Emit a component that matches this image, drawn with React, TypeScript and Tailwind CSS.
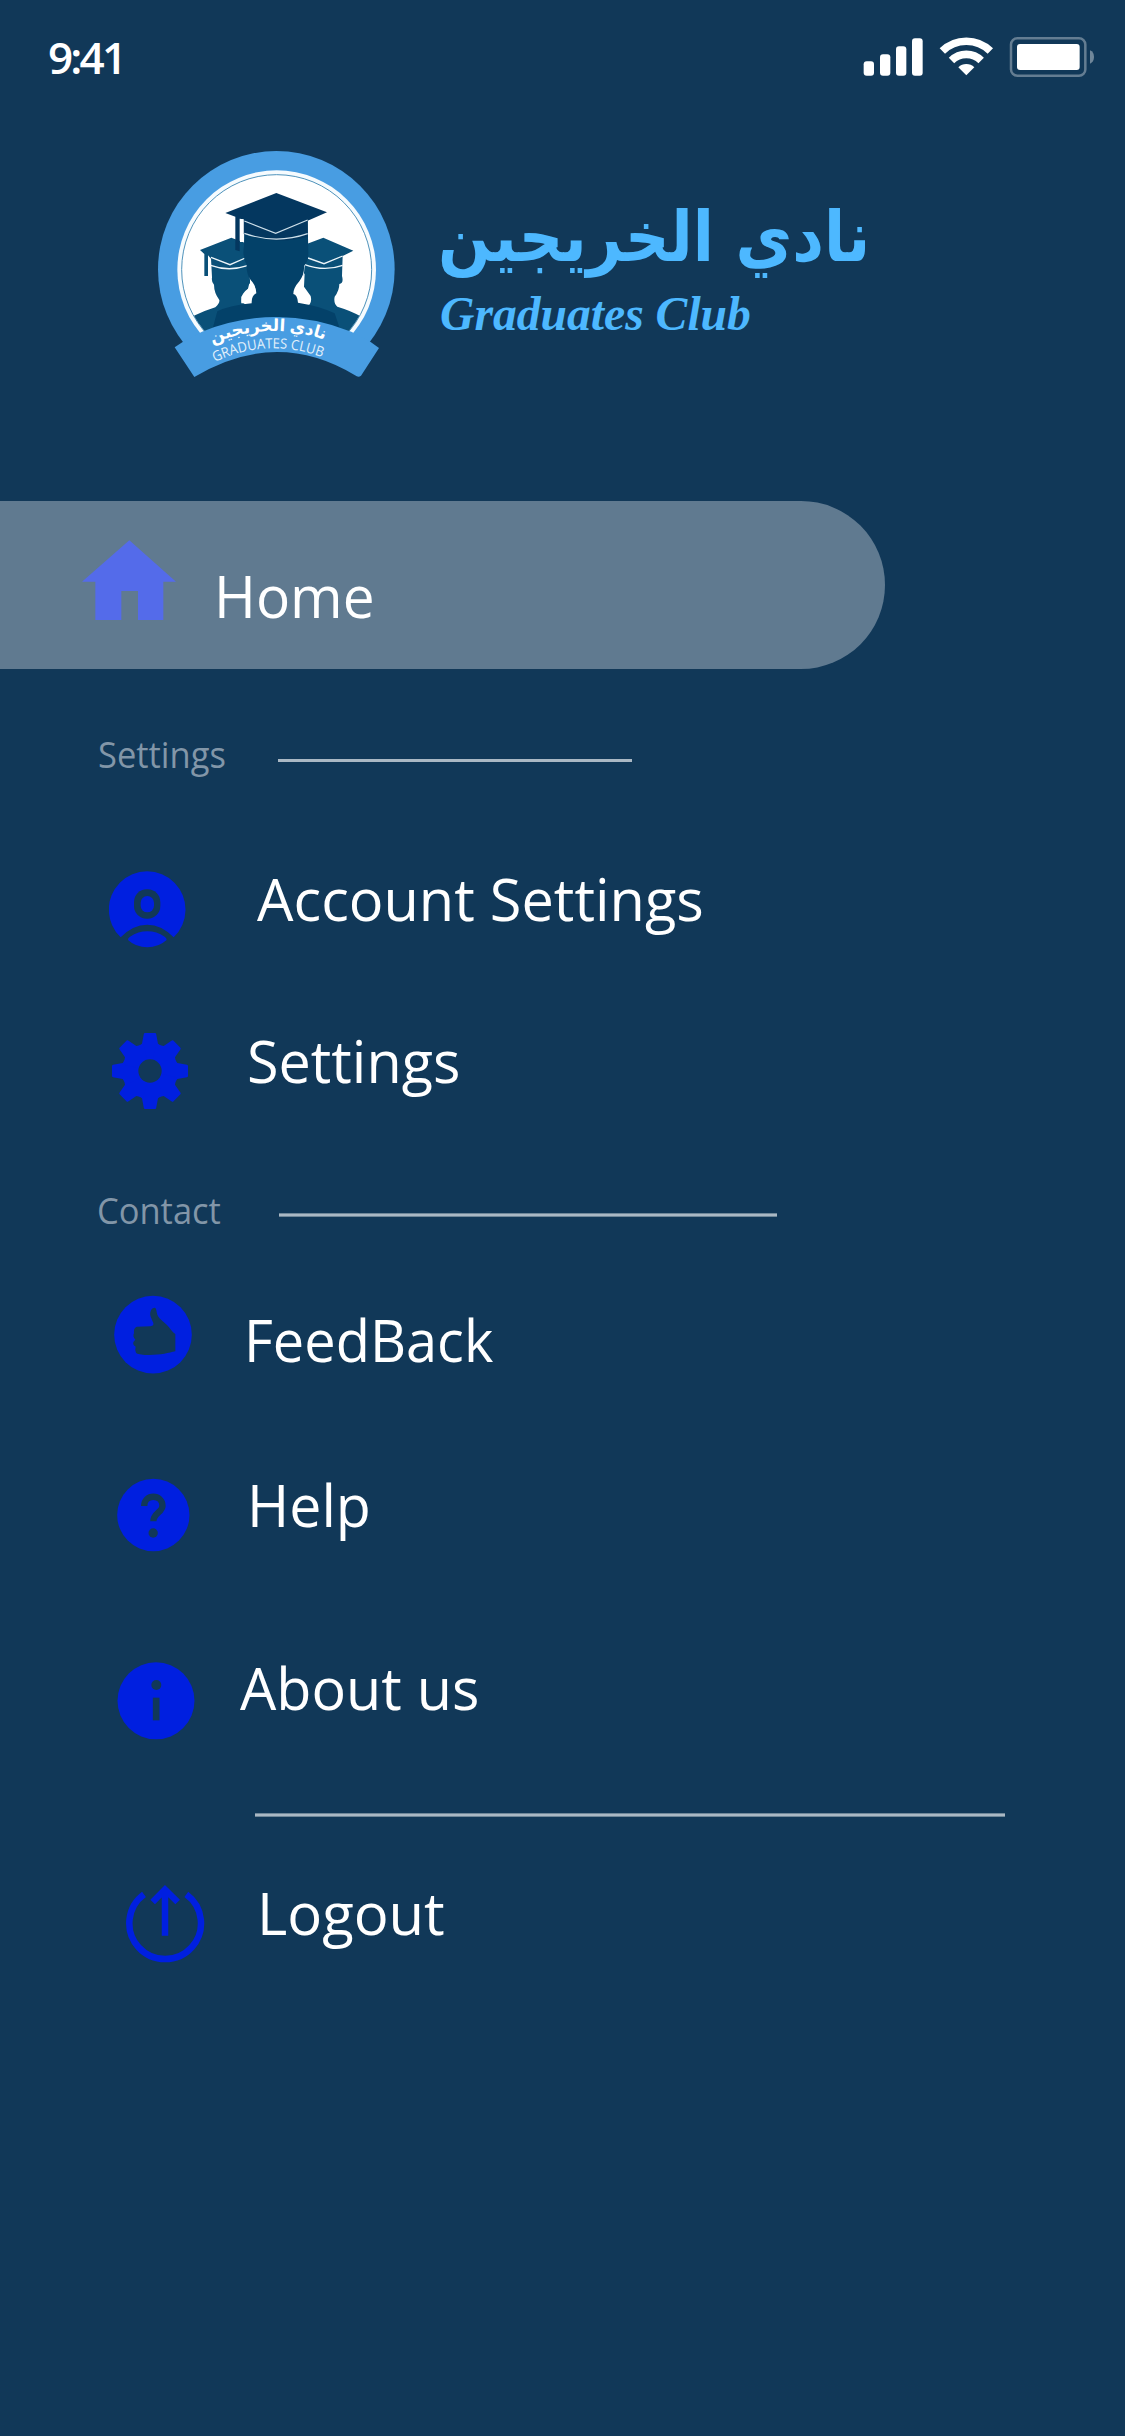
import React from "react";

const BLUE = "#001fe0";
const BG = "#113858";

function StatusBar() {
  return (
    <header className="flex h-[140px] items-start">
      <span className="ml-12 mt-[27px] text-[44px] leading-[60px] font-semibold tracking-[-2.8px]">9:41</span>
      <div className="mt-[34px] mr-[29px] ml-auto flex">
        <svg className="h-[46px] w-[64px]" viewBox="114 102 192 138" fill="#fff">
          <rect x="116" y="184" width="31" height="43" rx="9" />
          <rect x="165" y="163" width="31" height="64" rx="9" />
          <rect x="213" y="139" width="31" height="88" rx="9" />
          <rect x="261" y="115" width="32" height="112" rx="9" />
        </svg>
        <svg className="ml-[11px] h-[46px] w-[56px]" viewBox="339 102 168 138" fill="none" stroke="#fff">
          <path d="M352 153 A103 103 0 0 1 496 153" strokeWidth="23" />
          <path d="M379.500 181.500 A63 63 0 0 1 468.500 181.500" strokeWidth="23" />
          <path d="M400 202 A34 34 0 0 1 448 202 L424 226 Z" fill="#fff" stroke="none" />
        </svg>
        <svg className="ml-[14px] h-[46px] w-[88px]" viewBox="549 102 264 138">
          <rect x="558" y="114.500" width="223" height="113" rx="19" fill="none" stroke="#fff" strokeOpacity=".35" strokeWidth="7.500" />
          <rect x="576" y="132" width="188" height="78" rx="9" fill="#fff" />
          <path d="M795 151 Q807 156 807 171 Q807 186 795 191 Z" fill="#fff" fillOpacity=".4" />
        </svg>
      </div>
    </header>
  );
}

/* Three graduates in caps inside a ring, above a curved ribbon. */
function Emblem() {
  return (
    <svg className="h-[250px] w-[270px]" viewBox="0 0 810 750">
      <defs>
        <clipPath id="aboveRibbon"><rect width="810" height="618" /></clipPath>
        <clipPath id="innerDisc"><circle cx="410" cy="389" r="284" /></clipPath>
        <path id="arabicArc" d="M205 616 Q 390 536 565 604" />
        <path id="latinArc" d="M224 666 Q 385 590 553 654" />
      </defs>
      <g clipPath="url(#aboveRibbon)">
        <circle cx="409" cy="388" r="355" fill="#489de2" />
        <circle cx="410" cy="389" r="298" fill="#f6fbfe" />
        <circle cx="410" cy="389" r="285" fill="#fff" stroke="#4f93bb" strokeWidth="3" />
        <g clipPath="url(#innerDisc)">
          <g fill="#0a5078">
            <path d="M180 330 L274 293 L318 310 L330 420 L330 440 L304 470 Q304 488 318 494 L330 500 L330 580 L178 576 L160 528 Q188 514 226 502 Q240 490 238 480 Q222 458 222 434 Q214 428 216 412 L213 356 L204 346 L204 408 L193 408 L193 342 Z" />
            <path d="M640 332 L550 293 L500 312 L490 420 L490 440 L510 470 Q514 488 506 494 L490 500 L490 580 L640 576 L660 528 Q632 512 592 500 Q580 490 584 470 Q598 452 598 432 Q612 430 606 408 L608 348 Z" />
          </g>
          <path d="M213 352 L270 374 L316 354 M212 376 Q266 396 322 377 M608 348 L552 371 L504 354 M608 376 Q552 396 492 373" fill="none" stroke="#eef6fa" strokeWidth="4" />
          <path d="M328 430 L350 458 L338 490 L304 490 Q300 462 324 446 Z" fill="#fff" />
          <path d="M494 400 L492 440 L512 468 Q516 484 508 494 L482 494 Q466 476 458 460 Z" fill="#fff" />
          <path d="M313 240 L503 240 L505 340 Q506 362 492 378 Q494 402 478 424 Q460 444 460 462 Q472 464 474 488 Q540 498 584 520 L604 580 L214 580 L232 514 Q270 496 335 490 Q334 466 349 460 Q348 436 332 420 Q318 400 320 374 Q306 350 312 318 Z" fill="#034169" />
        </g>
        <path d="M256 219 L409 159 L561 217 L503 242 L503 290 Q410 316 311 282 L311 238 L299 236 L299 334 L286 330 L286 230 Z" fill="#04375f" />
        <path d="M313 243 L407 280 L503 240 M313 280 Q408 314 503 281" fill="none" stroke="#cfe0ea" strokeWidth="3.500" />
        <path d="M305 238 L305 306" stroke="#fff" strokeWidth="10" />
      </g>
      <path d="M104 622 L128 606 L186 575 Q410 487 634 575 L692 606 L717 624 L663 707 Q655 714 645 706 Q410 564 163 711 Z" fill="#489de2" />
      <text fill="#fff" fontFamily="'Noto Sans', 'DejaVu Sans', sans-serif" fontSize="50" fontWeight="700" textAnchor="middle">
        <textPath href="#arabicArc" startOffset="50%">نادي الخريجين</textPath>
      </text>
      <text fill="#e4f1fb" fontFamily="'Open Sans', sans-serif" fontSize="42" textLength="332" lengthAdjust="spacingAndGlyphs">
        <textPath href="#latinArc" textLength="332" lengthAdjust="spacingAndGlyphs">GRADUATES CLUB</textPath>
      </text>
    </svg>
  );
}

function Brand() {
  return (
    <section className="flex h-[361px] items-start pl-[140px] text-[#4db8ff]">
      <Emblem />
      <div className="mt-[57px] ml-[28px] flex w-[500px] flex-col items-start">
        <h1 dir="rtl" className="origin-left scale-x-[.883] font-['DejaVu_Sans',sans-serif] text-[70px] leading-[80px] font-bold whitespace-nowrap">نادي الخريجين</h1>
        <p className="mt-3 ml-[2px] origin-left scale-x-[.992] font-['Liberation_Serif',serif] text-[48px] leading-[50px] font-bold italic">Graduates Club</p>
      </div>
    </section>
  );
}

const itemText = "origin-left text-[59px] leading-[80px] whitespace-nowrap";
const labelText = "origin-left text-[36px] leading-[50px] text-[#8296a8]";

export default function App() {
  return (
    <main className="flex h-[2436px] w-[1125px] flex-col overflow-hidden bg-[#113858] font-['Open_Sans',sans-serif] text-white">
      <StatusBar />
      <Brand />

      <nav className="flex flex-col">
        <a className="flex h-[168px] w-[885px] items-start rounded-r-full bg-[#607a90] pl-[82px]">
          <svg className="mt-[39px] h-[80px] w-[94px]" viewBox="246 150 282 240" fill="#546bea">
            <path d="M388 151 L528 275 L490 275 L490 390 L414 390 L414 303 L364 303 L364 390 L286 390 L286 275 L246 275 Z" />
          </svg>
          <span className={`${itemText} mt-[54px] ml-[37.5px] scale-x-[.963]`}>Home</span>
        </a>

        <div className="flex h-[181px] items-start">
          <h2 className={`${labelText} mt-[61px] ml-[98px] w-[134px] scale-x-[.958]`}>Settings</h2>
          <hr className="mt-[90px] ml-[45.500px] h-[3px] w-[354px] border-0 bg-[#aab8c4]" />
        </div>

        <a className="flex h-[160px] items-start pl-[109px]">
          <svg className="mt-5 h-[78px] w-[77px]" viewBox="87 90 231 234" fill={BLUE}>
            <path d="M122 292 A115 115 0 1 1 281 292 Q245 254 202 254 Q158 254 122 292 Z" />
            <rect x="162" y="148" width="79" height="88" rx="38" fill={BG} />
            <rect x="182" y="168" width="40" height="49" rx="20" />
            <path d="M144 300 Q143 294 150 290 Q175 274 202 274 Q230 274 254 290 Q260 294 260 300 Q235 322 202 322 Q168 322 144 300 Z" />
          </svg>
          <span className={`${itemText} mt-2 ml-[71px] scale-x-[.978]`}>Account Settings</span>
        </a>

        <a className="flex h-[160px] items-start pl-[112px]">
          <svg className="mt-[23px] h-[76px] w-[76px]" viewBox="-114 -114 228 228" fill={BLUE}>
            {[0, 45, 90, 135, 180, 225, 270, 315].map((a) => (
              <path key={a} transform={`rotate(${a})`} d="M-15 -114 H15 Q18 -114 18.500 -111 L24 -82 L42 -70 L0 0 L-42 -70 L-24 -82 L-18.500 -111 Q-18 -114 -15 -114 Z" />
            ))}
            <circle r="35" fill={BG} />
          </svg>
          <span className={`${itemText} mt-[10px] ml-[59px] scale-x-[.975]`}>Settings</span>
        </a>

        <div className="flex h-[110px] items-start">
          <h2 className={`${labelText} mt-[16px] ml-[97px] w-[130px] scale-x-[.958]`}>Contact</h2>
          <hr className="mt-[43px] ml-[52px] h-1 w-[498px] border-0 border-y border-[#6f8799] bg-[#aab8c4]" />
        </div>

        <a className="flex h-[170px] items-start pl-[114px]">
          <svg className="mt-[15px] h-[79px] w-[79px]" viewBox="102 375 237 237" fill={BLUE}>
            <circle cx="219" cy="494" r="116.500" />
            <path d="M170 470 L212 469 Q222 467 220 459 C214 444 209 438 211 427 C213 417 218 413 225 413 C230 416 229 425 232 434 C238 449 258 459 267 472 Q278 487 286 492 L286 544 C265 549 240 556 200 555 C185 554 171 552 168 548 Q164 540 167 530 Q158 526 160 517 Q162 512 166 509 Q157 500 162 489 Q160 474 170 470 Z" fill={BG} />
          </svg>
          <span className={`${itemText} mt-[19px] ml-[51px] scale-x-[.948]`}>FeedBack</span>
        </a>

        <a className="flex h-[160px] items-start pl-[117px]">
          <svg className="mt-7 h-[74px] w-[74px]" viewBox="81 84 222 222" fill={BLUE}>
            <circle cx="190" cy="195" r="108.500" />
            <path d="M162.500 168 C162.500 131 217.500 131 217.500 168 C217.500 186 190 190 190 214" fill="none" stroke={BG} strokeWidth="19" />
            <circle cx="189.500" cy="249" r="14" fill={BG} />
          </svg>
          <span className={`${itemText} mt-[14px] ml-[56px] scale-x-[.971]`}>Help</span>
        </a>

        <a className="flex h-[180px] items-start pl-[117px]">
          <svg className="mt-[52px] h-[78px] w-[78px]" viewBox="81 636 234 234" fill={BLUE}>
            <circle cx="198" cy="752.500" r="115.500" />
            <circle cx="199" cy="705" r="15" fill={BG} />
            <rect x="188.500" y="743" width="20" height="68" fill={BG} />
          </svg>
          <span className={`${itemText} mt-[37px] ml-[45px] scale-x-[.974]`}>About us</span>
        </a>

        <hr className="mt-[23px] ml-[255px] h-1 w-[750px] border-0 border-y border-[#6f8799] bg-[#aab8c4]" />

        <a className="flex items-start pt-[55px] pl-[126px]">
          <svg className="mt-3 h-[79px] w-[79px]" viewBox="78 282 237 237" fill="none" stroke={BLUE} strokeWidth="19.500">
            <path d="M132 313 A107.500 107.500 0 1 0 259 313" />
            <path d="M195 437 V300 M158 336 L195 298.500 L233 336" />
          </svg>
          <span className={`${itemText} ml-[52.3px] scale-x-[.983]`}>Logout</span>
        </a>
      </nav>
    </main>
  );
}
